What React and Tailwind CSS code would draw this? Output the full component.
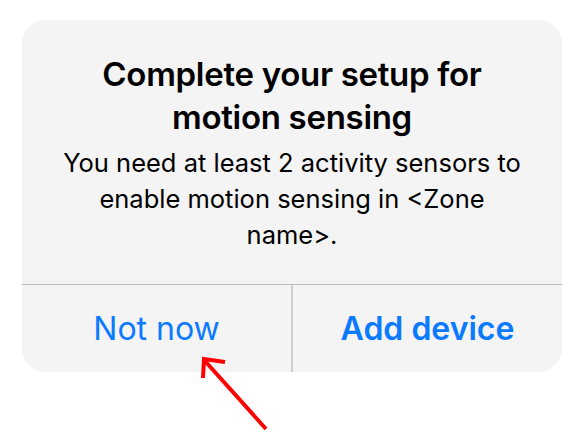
export default function App() {
  return (
    <div className="relative w-[586px] h-[448px] bg-white" style={{ fontFamily: 'Inter, "Noto Sans", sans-serif' }}>
      <div className="absolute left-[22px] top-[20px] w-[540px] rounded-[24px] bg-[#f4f4f4] overflow-hidden">
        <div className="pt-[33px] pb-[31px] text-center text-black">
          <h1 className="text-[33px] leading-[43px] font-semibold tracking-[-0.3px]">
            Complete your setup for
            <br />
            motion sensing
          </h1>
          <p className="mt-[6px] mx-auto w-[468px] text-[25.5px] leading-[36px]">
            You need at least 2 activity sensors to enable motion sensing in &lt;Zone name&gt;.
          </p>
        </div>
        <div className="flex h-[88px] border-t-[1.5px] border-[#bcbcbc]">
          <button className="flex-1 text-[32px] text-[#0a7aff]">Not now</button>
          <div className="w-[2px] bg-[#cfcfcf]" />
          <button className="flex-1 text-[32px] font-semibold text-[#0a7aff]">Add device</button>
        </div>
      </div>
      <svg className="absolute left-0 top-0" width="586" height="448" viewBox="0 0 586 448">
        <g stroke="#ff0000" strokeWidth="4" fill="none" strokeLinecap="butt">
          <line x1="266" y1="429" x2="205" y2="361" />
          <polyline points="225,362 204,359 203,378" />
        </g>
      </svg>
    </div>
  )
}
